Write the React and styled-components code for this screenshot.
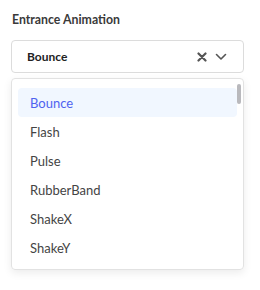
import React from 'react'
import styled, { createGlobalStyle } from 'styled-components'

const animations = ['Bounce', 'Flash', 'Pulse', 'RubberBand', 'ShakeX', 'ShakeY']

function App() {
  const selected = 'Bounce'
  return (
    <>
      <GlobalStyle />
      <Wrapper>
        <Label>Entrance Animation</Label>
        <Select>
          <Value>{selected}</Value>
          <Actions>
            <svg width="10" height="10" viewBox="0 0 10 10">
              <path d="M1.5 1.5 L8.5 8.5 M8.5 1.5 L1.5 8.5" stroke="#555" strokeWidth="2.2" strokeLinecap="round" />
            </svg>
            <svg width="12" height="8" viewBox="0 0 12 8">
              <path d="M1.5 1.5 L6 6 L10.5 1.5" stroke="#555" strokeWidth="1.6" fill="none" strokeLinecap="round" strokeLinejoin="round" />
            </svg>
          </Actions>
        </Select>
        <Menu>
          <List>
            {animations.map((name) => (
              <Option key={name} active={name === selected}>{name}</Option>
            ))}
          </List>
          <ScrollThumb />
        </Menu>
      </Wrapper>
    </>
  )
}

export default App

const GlobalStyle = createGlobalStyle`
  body {
    margin: 0;
    background: #fff;
    font-family: Lato, "Open Sans", sans-serif;
  }
`

const Wrapper = styled.div`
  width: 260px;
  height: 290px;
  padding: 11px 16px 0 11px;
  box-sizing: border-box;
  display: flex;
  flex-direction: column;
`

const Label = styled.div`
  font-size: 12.3px;
  font-weight: 700;
  color: #3a3a3a;
  line-height: 18px;
  padding-left: 1px;
  margin-bottom: 11px;
`

const Select = styled.div`
  height: 33px;
  border: 1px solid #dcdcdc;
  border-radius: 4px;
  display: flex;
  align-items: center;
  padding: 0 16px 0 15px;
  box-sizing: border-box;
`

const Value = styled.div`
  flex: 1;
  font-size: 12px;
  font-weight: 700;
  color: #222;
`

const Actions = styled.div`
  display: flex;
  align-items: center;
  gap: 8px;
`

const Menu = styled.div`
  position: relative;
  margin-top: 5px;
  height: 192px;
  border: 1px solid #e2e2e2;
  border-radius: 4px;
  box-shadow: 0 3px 8px rgba(0, 0, 0, 0.08);
  box-sizing: border-box;
  padding: 9px 6px 8px 6px;
`

const List = styled.div`
  display: flex;
  flex-direction: column;
`

const ScrollThumb = styled.div`
  position: absolute;
  top: 5px;
  right: 2px;
  width: 4px;
  height: 20px;
  border-radius: 2px;
  background: #b9b9bd;
`

const Option = styled.div`
  height: 29px;
  display: flex;
  align-items: center;
  padding-left: 12px;
  border-radius: 4px;
  font-size: 13px;
  color: ${(p) => (p.active ? '#4f63f0' : '#444')};
  background: ${(p) => (p.active ? '#f1f7ff' : 'transparent')};
`
